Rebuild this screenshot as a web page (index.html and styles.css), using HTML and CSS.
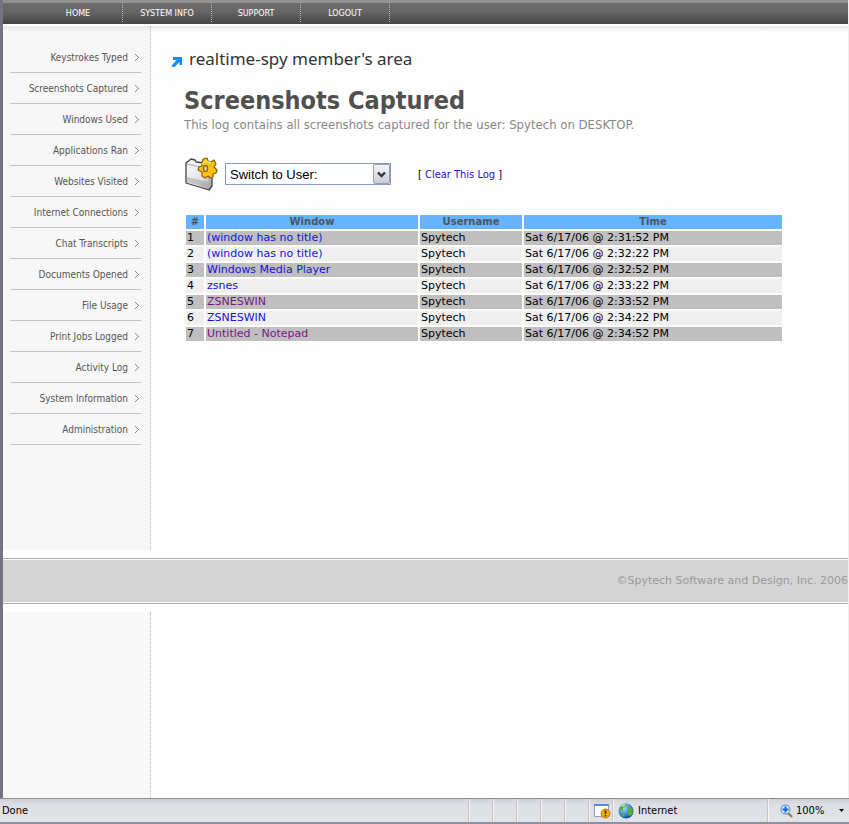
FILE: index.html
```html
<!DOCTYPE html>
<html lang="en">
<head>
<meta charset="utf-8">
<title>Realtime-Spy Member's Area</title>
<link rel="stylesheet" href="styles.css">
</head>
<body>
<div class="page">
  <nav class="topnav">
    <a href="#">HOME</a>
    <a href="#">SYSTEM INFO</a>
    <a href="#">SUPPORT</a>
    <a href="#">LOGOUT</a>
  </nav>
  <div class="columns">
    <nav class="sidebar">
      <a href="#">Keystrokes Typed<svg class="chevron" viewBox="0 0 4 7"><use href="#dots"/></svg></a>
      <a href="#">Screenshots Captured<svg class="chevron" viewBox="0 0 4 7"><use href="#dots"/></svg></a>
      <a href="#">Windows Used<svg class="chevron" viewBox="0 0 4 7"><use href="#dots"/></svg></a>
      <a href="#">Applications Ran<svg class="chevron" viewBox="0 0 4 7"><use href="#dots"/></svg></a>
      <a href="#">Websites Visited<svg class="chevron" viewBox="0 0 4 7"><use href="#dots"/></svg></a>
      <a href="#">Internet Connections<svg class="chevron" viewBox="0 0 4 7"><use href="#dots"/></svg></a>
      <a href="#">Chat Transcripts<svg class="chevron" viewBox="0 0 4 7"><use href="#dots"/></svg></a>
      <a href="#">Documents Opened<svg class="chevron" viewBox="0 0 4 7"><use href="#dots"/></svg></a>
      <a href="#">File Usage<svg class="chevron" viewBox="0 0 4 7"><use href="#dots"/></svg></a>
      <a href="#">Print Jobs Logged<svg class="chevron" viewBox="0 0 4 7"><use href="#dots"/></svg></a>
      <a href="#">Activity Log<svg class="chevron" viewBox="0 0 4 7"><use href="#dots"/></svg></a>
      <a href="#">System Information<svg class="chevron" viewBox="0 0 4 7"><use href="#dots"/></svg></a>
      <a href="#">Administration<svg class="chevron" viewBox="0 0 4 7"><use href="#dots"/></svg></a>
    </nav>
    <main class="content">
      <div class="area">
        <svg width="11" height="11" viewBox="0 0 11 11"><path d="M2 1h9v8H8.500V6L3.500 11 0 10.500 5.500 4H2z" fill="#1b8cea"/></svg>
        <span>realtime-spy member's area</span>
      </div>
      <div class="log">
        <h1>Screenshots Captured</h1>
        <p class="intro">This log contains all screenshots captured for the user: Spytech on DESKTOP.</p>
        <div class="tools">
          <svg width="34" height="34" viewBox="0 0 34 34">
            <defs>
              <linearGradient id="box" x1="0" y1="0" x2="1" y2="1"><stop offset="0" stop-color="#fff"/><stop offset=".6" stop-color="#e4e4e4"/><stop offset="1" stop-color="#999"/></linearGradient>
              <path id="dots" d="M0 0h1v1H0zM1 1h1v1H1zM3 3h1v1H3zM2 2h1v1H2zM1 5h1v1H1zM0 6h1v1H0zM2 4h1v1H2z"/>
            </defs>
            <path d="M2 6l5-4 4 1 1 2 16 2v22l-3 4L2 26z" fill="url(#box)" stroke="#444" stroke-width="1.300" stroke-linejoin="round"/>
            <path d="M3 7l22 5v19M26 12l2-3" fill="none" stroke="#aaa"/>
            <path d="M3 20l22 5v6L3 25z" fill="#aaa" opacity=".6"/>
            <path d="M19 2l4-1 1 3 3 1 3-2 2 4-2 3 3 3-1 3-3 1 0 3-3 1-2-2-3 2-3-2 0-4-4-2 1-3 3-1 0-3z" fill="#fbc313" stroke="#8d5d00" stroke-width="1.200" stroke-linejoin="round"/>
            <path d="M18 7l4-3 5 2" fill="none" stroke="#ffe97c" stroke-width="1.500"/>
            <ellipse cx="21.500" cy="11.500" rx="2" ry="3" fill="#ddd" stroke="#9a6500" stroke-width="1.500"/>
          </svg>
          <div class="picker">
            <select aria-label="Switch to User"><option>Switch to User:</option></select>
            <span class="drop"><svg width="9" height="7" viewBox="0 0 9 7"><path d="M1 1.500l3.500 3.500L8 1.500" fill="none" stroke="#333" stroke-width="2.400"/></svg></span>
          </div>
          <span class="clear">[ <a href="#">Clear This Log</a> ]</span>
        </div>
        <table>
          <colgroup><col class="c-num"><col class="c-window"><col class="c-user"><col></colgroup>
          <thead><tr><th>#</th><th>Window</th><th>Username</th><th>Time</th></tr></thead>
          <tbody>
            <tr><td>1</td><td><a href="#">(window has no title)</a></td><td>Spytech</td><td>Sat 6/17/06 @ 2:31:52 PM</td></tr>
            <tr><td>2</td><td><a href="#">(window has no title)</a></td><td>Spytech</td><td>Sat 6/17/06 @ 2:32:22 PM</td></tr>
            <tr><td>3</td><td><a href="#">Windows Media Player</a></td><td>Spytech</td><td>Sat 6/17/06 @ 2:32:52 PM</td></tr>
            <tr><td>4</td><td><a href="#">zsnes</a></td><td>Spytech</td><td>Sat 6/17/06 @ 2:33:22 PM</td></tr>
            <tr><td>5</td><td><a href="#" class="seen">ZSNESWIN</a></td><td>Spytech</td><td>Sat 6/17/06 @ 2:33:52 PM</td></tr>
            <tr><td>6</td><td><a href="#">ZSNESWIN</a></td><td>Spytech</td><td>Sat 6/17/06 @ 2:34:22 PM</td></tr>
            <tr><td>7</td><td><a href="#" class="seen">Untitled - Notepad</a></td><td>Spytech</td><td>Sat 6/17/06 @ 2:34:52 PM</td></tr>
          </tbody>
        </table>
      </div>
    </main>
  </div>
  <footer class="footer"><div>©Spytech Software and Design, Inc. 2006</div></footer>
  <div class="rest"></div>
</div>
<div class="status">
  <span class="done">Done</span>
  <span class="cell"></span><span class="cell"></span><span class="cell"></span><span class="cell"></span><span class="cell"></span>
  <span class="cell blocked">
    <svg width="17" height="16" viewBox="0 0 17 16"><path d="M.5 1.500h14v12H.5z" fill="#fff" stroke="#98a0ae"/><path d="M0 1h15v2H0z" fill="#5b8bd8"/><circle cx="11.500" cy="10.500" r="4.500" fill="#f5a913" stroke="#b87808"/><path d="M11.500 7.500v3.500M11.500 12v1.500" stroke="#412700" stroke-width="1.600"/></svg>
  </span>
  <span class="cell zone">
    <svg width="16" height="16" viewBox="0 0 16 16"><defs><radialGradient id="sea" cx=".35" cy=".3" r=".75"><stop offset="0" stop-color="#a5d8fa"/><stop offset=".6" stop-color="#3b87d4"/><stop offset="1" stop-color="#123c86"/></radialGradient></defs><circle cx="8" cy="8" r="7.500" fill="url(#sea)"/><path d="M2 4l3-3h3v2L5 5l0 2-3 1-1-1zM10 5l3-1 2 4-1 4-3 1-1-3-1-2zM3 11l3-1 1 3-2 1z" fill="#4fae3f"/><path d="M4 3l3-1" stroke="#d9f3ba" stroke-width="1.500"/></svg>
    Internet
  </span>
  <button class="cell zoom" type="button">
    <svg width="13" height="14" viewBox="0 0 13 14"><path d="M8 9l4 4" stroke="#a17a45" stroke-width="2.400"/><circle cx="5.500" cy="5.500" r="4.500" fill="#d9edff" stroke="#7ea2d0" stroke-width="1.300"/><path d="M5.500 2.500v6M2.500 5.500h6" stroke="#1766cc" stroke-width="2"/></svg>
    100%
    <svg class="caret" width="5" height="3" viewBox="0 0 5 3"><path d="M0 0h5L2.500 3z"/></svg>
  </button>
</div>
</body>
</html>
```
FILE: styles.css
```css
* { box-sizing: border-box; }
body {
  margin: 0;
  min-height: 100vh;
  display: flex;
  flex-direction: column;
  background: #fefefe;
  font-family: "DejaVu Sans", Verdana, sans-serif;
  font-size: 11px;
  color: #000;
}
a { color: #1a10d8; text-decoration: none; }
.page {
  flex: 1;
  display: flex;
  flex-direction: column;
  border-left: 3px solid #77727f;
  border-right: 1px solid #eee;
}
.topnav {
  display: flex;
  height: 24px;
  padding: 3px 0 0 31px;
  background: linear-gradient(#929292 0 3px, #6c6c6c 3px, #666 12px, #444 100%);
}
.topnav a {
  width: 89px;
  height: 19px;
  line-height: 21px;
  text-align: center;
  color: #fff;
  font-size: 8px;
  border-right: 1px dotted #bbb;
}
.columns {
  display: flex;
  margin-top: 2px;
  background: linear-gradient(#e8e8e8, #fefefe00 6px);
}
.sidebar {
  width: 148px;
  padding: 16px 9px 105px 7px;
  background: linear-gradient(#e8e8e8, #f7f7f7 6px);
  border-right: 1px dotted #bbb;
  font-family: "DejaVu Sans Condensed", Tahoma, sans-serif;
  font-size: 10px;
}
.sidebar a {
  display: flex;
  align-items: center;
  justify-content: flex-end;
  gap: 7px;
  height: 31px;
  padding-right: 2px;
  border-bottom: 1px solid #c3c3c3;
  color: #555;
  white-space: nowrap;
}
.chevron { width: 4px; height: 7px; fill: #888; }
.content { flex: 1; padding: 22px 20px 0 20px; }
.area {
  display: flex;
  align-items: center;
  gap: 7px;
  font-family: "Noto Sans", sans-serif;
  font-size: 17px;
  line-height: 22px;
  color: #333;
}
.area svg { margin-top: 4px; }
.log { padding-left: 13px; }
h1 {
  margin: 16px 0 0;
  font: bold 25px/30px "DejaVu Sans Condensed", Tahoma, sans-serif;
  color: #505050;
}
.intro {
  margin: 0;
  font: 13px/18px "DejaVu Sans Condensed", Tahoma, sans-serif;
  color: #888;
}
.tools { display: flex; align-items: center; height: 36px; margin-top: 22px; }
.picker { position: relative; margin-left: 7px; }
select {
  appearance: none;
  width: 166px;
  height: 22px;
  padding: 0 20px 0 4px;
  border: 1px solid #7f9db9;
  border-radius: 0;
  background: #fff;
  font: 13px "Liberation Sans", Arial, sans-serif;
  color: #000;
}
.drop {
  position: absolute;
  top: 1px;
  right: 1px;
  width: 17px;
  height: 20px;
  display: grid;
  place-items: center;
  border: 1px solid #9a9fae;
  border-radius: 2px;
  background: linear-gradient(#f4f5f8, #c9ccd8);
  pointer-events: none;
}
.clear {
  margin-left: 27px;
  font: 11px "DejaVu Sans Condensed", Tahoma, sans-serif;
}
table {
  width: 600px;
  max-width: 100%;
  margin-top: 21px;
  table-layout: fixed;
  border-collapse: separate;
  border-spacing: 2px;
}
.c-num { width: 18px; }
.c-window { width: 212px; }
.c-user { width: 102px; }
th, td { height: 14px; padding: 0 1px; line-height: 14px; text-align: left; white-space: nowrap; }
th { background: #66b3ff; color: #4b5560; font-size: 10px; text-align: center; }
td { background: #efefef; }
tr:nth-child(odd) td { background: #bfbfbf; }
a.seen { color: #7a1580; }
.footer {
  margin: 8px 0;
  padding: 1px 0;
  border-top: 1px solid #aaa;
  border-bottom: 1px solid #aaa;
  color: #999;
}
.footer div { line-height: 42px; background: #d4d4d4; text-align: right; }
.rest { flex: 1; width: 148px; background: #f8f8f8; border-right: 1px dotted #bbb; }
.status {
  display: flex;
  height: 26px;
  border-top: 1px solid #8e8d94;
  border-bottom: 2px solid #8f8f9f;
  background: linear-gradient(#d0d1d7, #dedfe4 6px, #e2e3e7);
  font: 11px/24px "DejaVu Sans Condensed", Tahoma, sans-serif;
}
.done { flex: 1; padding-left: 2px; }
.cell { width: 24px; height: 23px; border-left: 1px solid #f4f4f6; box-shadow: -1px 0 #c4c5cc; }
.blocked, .zone, .zoom { display: flex; align-items: center; }
.blocked { padding-left: 4px; }
.zone { width: 155px; gap: 4px; padding-left: 4px; }
.zoom {
  width: 81px;
  padding: 0 5px 0 11px;
  gap: 3px;
  border-width: 0 0 0 1px;
  background: none;
  font: inherit;
  color: #000;
}
.caret { margin-left: auto; }
```
